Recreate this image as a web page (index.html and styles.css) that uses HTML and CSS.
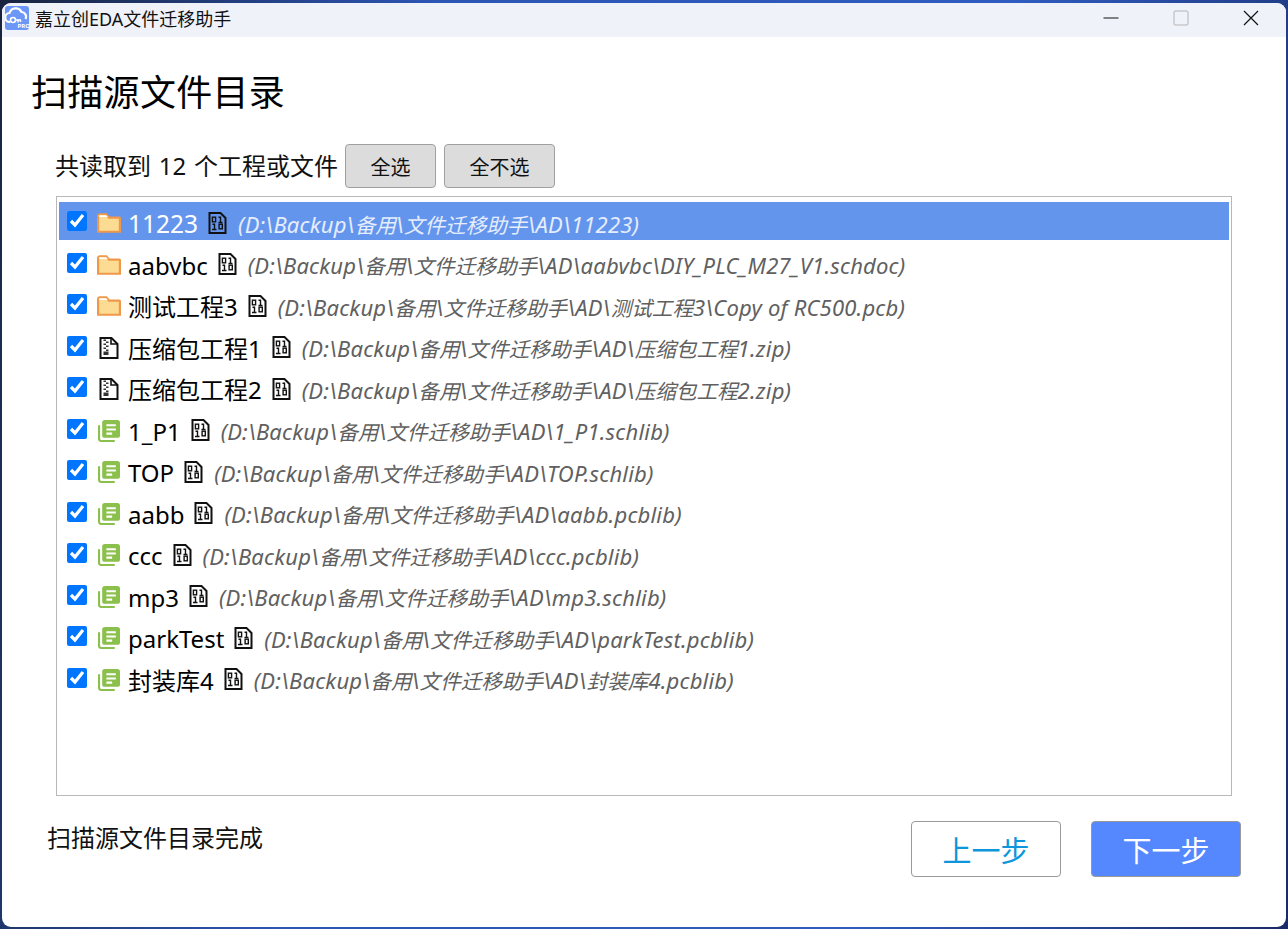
FILE: index.html
```html
<!DOCTYPE html>
<html lang="zh-CN">
<head>
    <meta charset="UTF-8">
    <title>嘉立创EDA文件迁移助手</title>
    <link rel="stylesheet" href="styles.css">
</head>
<body>
    <svg class="defs" width="0" height="0">
        <symbol id="i-folder" viewBox="0 0 22 19">
            <path d="M1 17.5V3a1.5 1.5 0 0 1 1.500-1.500h6L11 4.500h9.500a.5.5 0 0 1 .5.500v12.500z" fill="#fcdc93" stroke="#f0984a" stroke-width="2"/>
            <path d="M2 4V2.500h6.500L10 4z" fill="#fff"/>
        </symbol>
        <symbol id="i-bin" viewBox="0 0 18 22">
            <path d="M1 1h11l5 5v15H1z" fill="none" stroke="#111" stroke-width="2"/>
            <g fill="none" stroke="#111" stroke-width="1.400">
                <rect x="3.900" y="5.200" width="3.200" height="4.600"/>
                <rect x="10.600" y="12.200" width="3.200" height="4.600"/>
                <path d="M10 5.200h2v5.300M10 10.500h4M4 12.200h2v5.300M3.500 17.500h4.500"/>
            </g>
        </symbol>
        <symbol id="i-zip" viewBox="0 0 20 22">
            <path d="M1.500 1h11l6 6v14h-17z" fill="#fff" stroke="#111" stroke-width="2"/>
            <path d="M12 1v6h6" fill="none" stroke="#111" stroke-width="1.600"/>
            <path d="M4.500 2.500h2.500v1.500H4.500zM7 4.500h2.500V6H7zM4.500 6.500h2.500V8H4.500zM7 8.500h2.500V10H7zM4.500 10.500h2.500V12H4.500zM7 12.500h2.500V14H7zM4.500 14.500h5V18h-5z" fill="#333"/>
        </symbol>
        <symbol id="i-lib" viewBox="0 0 21 21">
            <rect x="4" y="0" width="17" height="17" rx="2.500" fill="#8cc04c"/>
            <path d="M1 5v13a2 2 0 0 0 2 2h13" fill="none" stroke="#8cc04c" stroke-width="2"/>
            <path d="M8 4h9v2H8zM8 8h9v2H8zM8 12h5.500v2H8z" fill="#fff"/>
        </symbol>
    </svg>

    <div class="window">
        <header class="titlebar">
            <svg class="logo" viewBox="0 0 24 24">
                <rect width="24" height="24" rx="3" fill="#6c97f6"/>
                <path d="M5 16a4.500 4.500 0 0 1-.5-9 6.500 6.500 0 0 1 12-1 4.800 4.800 0 0 1 4 7" fill="none" stroke="#fff" stroke-width="2.200"/>
                <circle cx="8" cy="14" r="2.500" fill="none" stroke="#fff" stroke-width="1.600"/>
                <path d="M10 14h6M13 14v2.500M15.500 14v2" fill="none" stroke="#fff" stroke-width="1.500"/>
                <text x="12.500" y="22" class="logo_pro">PRO</text>
            </svg>
            <span class="app_title">嘉立创EDA文件迁移助手</span>
            <div class="win_btns">
                <span class="win_btn"><svg width="16" height="16" viewBox="0 0 16 16"><path d="M.5 8h15" stroke="#111" stroke-width="1"/></svg></span>
                <span class="win_btn"><svg width="16" height="16" viewBox="0 0 16 16"><rect x="1" y="1" width="14" height="14" rx="2" fill="none" stroke="#c8c8cc" stroke-width="1.500"/></svg></span>
                <span class="win_btn"><svg width="16" height="16" viewBox="0 0 16 16"><path d="M1 1l14 14M15 1L1 15" stroke="#111" stroke-width="1.200"/></svg></span>
            </div>
        </header>

        <main class="content">
            <h1 class="page_title">扫描源文件目录</h1>

            <div class="toolbar">
                <span class="count">共读取到 12 个工程或文件</span>
                <button class="tool_btn tool_all">全选</button>
                <button class="tool_btn tool_none">全不选</button>
            </div>

            <ul class="file_list">
                <li class="file_row selected">
                    <input type="checkbox" checked>
                    <svg class="type_icon"><use href="#i-folder"/></svg>
                    <span class="name">11223</span>
                    <svg class="bin_icon"><use href="#i-bin"/></svg>
                    <span class="path">(D:\Backup\<i>备用</i>\<i>文件迁移助手</i>\AD\11223)</span>
                </li>
                <li class="file_row">
                    <input type="checkbox" checked>
                    <svg class="type_icon"><use href="#i-folder"/></svg>
                    <span class="name">aabvbc</span>
                    <svg class="bin_icon"><use href="#i-bin"/></svg>
                    <span class="path">(D:\Backup\<i>备用</i>\<i>文件迁移助手</i>\AD\aabvbc\DIY_PLC_M27_V1.schdoc)</span>
                </li>
                <li class="file_row">
                    <input type="checkbox" checked>
                    <svg class="type_icon"><use href="#i-folder"/></svg>
                    <span class="name">测试工程3</span>
                    <svg class="bin_icon"><use href="#i-bin"/></svg>
                    <span class="path">(D:\Backup\<i>备用</i>\<i>文件迁移助手</i>\AD\<i>测试工程</i>3\Copy of RC500.pcb)</span>
                </li>
                <li class="file_row">
                    <input type="checkbox" checked>
                    <svg class="type_icon"><use href="#i-zip"/></svg>
                    <span class="name">压缩包工程1</span>
                    <svg class="bin_icon"><use href="#i-bin"/></svg>
                    <span class="path">(D:\Backup\<i>备用</i>\<i>文件迁移助手</i>\AD\<i>压缩包工程</i>1.zip)</span>
                </li>
                <li class="file_row">
                    <input type="checkbox" checked>
                    <svg class="type_icon"><use href="#i-zip"/></svg>
                    <span class="name">压缩包工程2</span>
                    <svg class="bin_icon"><use href="#i-bin"/></svg>
                    <span class="path">(D:\Backup\<i>备用</i>\<i>文件迁移助手</i>\AD\<i>压缩包工程</i>2.zip)</span>
                </li>
                <li class="file_row">
                    <input type="checkbox" checked>
                    <svg class="type_icon"><use href="#i-lib"/></svg>
                    <span class="name">1_P1</span>
                    <svg class="bin_icon"><use href="#i-bin"/></svg>
                    <span class="path">(D:\Backup\<i>备用</i>\<i>文件迁移助手</i>\AD\1_P1.schlib)</span>
                </li>
                <li class="file_row">
                    <input type="checkbox" checked>
                    <svg class="type_icon"><use href="#i-lib"/></svg>
                    <span class="name">TOP</span>
                    <svg class="bin_icon"><use href="#i-bin"/></svg>
                    <span class="path">(D:\Backup\<i>备用</i>\<i>文件迁移助手</i>\AD\TOP.schlib)</span>
                </li>
                <li class="file_row">
                    <input type="checkbox" checked>
                    <svg class="type_icon"><use href="#i-lib"/></svg>
                    <span class="name">aabb</span>
                    <svg class="bin_icon"><use href="#i-bin"/></svg>
                    <span class="path">(D:\Backup\<i>备用</i>\<i>文件迁移助手</i>\AD\aabb.pcblib)</span>
                </li>
                <li class="file_row">
                    <input type="checkbox" checked>
                    <svg class="type_icon"><use href="#i-lib"/></svg>
                    <span class="name">ccc</span>
                    <svg class="bin_icon"><use href="#i-bin"/></svg>
                    <span class="path">(D:\Backup\<i>备用</i>\<i>文件迁移助手</i>\AD\ccc.pcblib)</span>
                </li>
                <li class="file_row">
                    <input type="checkbox" checked>
                    <svg class="type_icon"><use href="#i-lib"/></svg>
                    <span class="name">mp3</span>
                    <svg class="bin_icon"><use href="#i-bin"/></svg>
                    <span class="path">(D:\Backup\<i>备用</i>\<i>文件迁移助手</i>\AD\mp3.schlib)</span>
                </li>
                <li class="file_row">
                    <input type="checkbox" checked>
                    <svg class="type_icon"><use href="#i-lib"/></svg>
                    <span class="name">parkTest</span>
                    <svg class="bin_icon"><use href="#i-bin"/></svg>
                    <span class="path">(D:\Backup\<i>备用</i>\<i>文件迁移助手</i>\AD\parkTest.pcblib)</span>
                </li>
                <li class="file_row">
                    <input type="checkbox" checked>
                    <svg class="type_icon"><use href="#i-lib"/></svg>
                    <span class="name">封装库4</span>
                    <svg class="bin_icon"><use href="#i-bin"/></svg>
                    <span class="path">(D:\Backup\<i>备用</i>\<i>文件迁移助手</i>\AD\<i>封装库</i>4.pcblib)</span>
                </li>
            </ul>

            <footer class="bottom">
                <span class="status">扫描源文件目录完成</span>
                <div class="steps">
                    <button class="step_btn prev">上一步</button>
                    <button class="step_btn next">下一步</button>
                </div>
            </footer>
        </main>

        <!-- 화면 전체에 깔린 옅은 워터마크 -->
        <svg class="watermark" width="1288" height="929">
            <defs>
                <g id="wm-set">
                    <text transform="translate(0 0) rotate(-48)">zouyuxuan</text>
                    <text transform="translate(175 0) rotate(-48)">2025-02-25</text>
                    <text transform="translate(350 0) rotate(-48)">09:29</text>
                </g>
                <g id="wm-row">
                    <use href="#wm-set" x="0"/>
                    <use href="#wm-set" x="525"/>
                    <use href="#wm-set" x="1050"/>
                    <use href="#wm-set" x="1575"/>
                    <use href="#wm-set" x="2100"/>
                </g>
            </defs>
            <use href="#wm-row" x="-921" y="82"/>
            <use href="#wm-row" x="-834" y="167"/>
            <use href="#wm-row" x="-747" y="252"/>
            <use href="#wm-row" x="-660" y="337"/>
            <use href="#wm-row" x="-1098" y="422"/>
            <use href="#wm-row" x="-1011" y="507"/>
            <use href="#wm-row" x="-924" y="592"/>
            <use href="#wm-row" x="-837" y="677"/>
            <use href="#wm-row" x="-750" y="762"/>
            <use href="#wm-row" x="-663" y="847"/>
            <use href="#wm-row" x="-576" y="932"/>
        </svg>
    </div>
</body>
</html>
```

FILE: styles.css
```css
*{
    padding: 0;
    margin: 0;
    box-sizing: border-box;
    font-family: "Noto Sans", "Noto Sans CJK SC", sans-serif;
}
ul{
    list-style-type: none;
}
html, body{
    height: 100%;
    overflow: hidden;
}
body{
    padding: 3px 2px 2px 2px;
    background: linear-gradient(100deg, #18243f 0%, #2c55b4 30%, #2f5cc0 70%, #1a2c66 100%);
}
.defs{
    position: absolute;
}
.window{
    position: relative;
    height: 924px;
    overflow: hidden;
    background: #fff;
    border-radius: 9px;
}
.titlebar{
    display: flex;
    align-items: center;
    height: 34px;
    padding: 0 0 4px 3px;
    background: #f0f2f9;
}
.logo{
    width: 24px;
    height: 24px;
}
.logo_pro{
    font-size: 6px;
    font-weight: 700;
    fill: #fff;
}
.app_title{
    margin-left: 6px;
    font-size: 18px;
    color: #111;
}
.win_btns{
    display: flex;
    margin-left: auto;
}
.win_btn{
    display: flex;
    justify-content: center;
    align-items: center;
    width: 70px;
    height: 30px;
}
.content{
    padding: 31px 45px 0 30px;
}
.page_title{
    margin-left: -1px;
    font-size: 36px;
    font-weight: 400;
    line-height: 50px;
    letter-spacing: .3px;
    color: #000;
}
.toolbar{
    display: flex;
    align-items: center;
    height: 44px;
    margin: 26px 0 8px 23px;
}
.count{
    padding-bottom: 3px;
    font-size: 24px;
    word-spacing: 1.500px;
    color: #111;
}
.tool_btn{
    height: 44px;
    margin-left: 8px;
    border: 1px solid #a0a0a0;
    border-radius: 4px;
    background: #dcdcdc;
    font-size: 20px;
    color: #111;
}
.tool_all{
    width: 91px;
    margin-left: 7px;
}
.tool_none{
    width: 111px;
}
.file_list{
    display: flex;
    flex-direction: column;
    gap: 3.500px;
    width: 1176px;
    height: 600px;
    margin-left: 24px;
    padding: 5px 2px 0 2px;
    border: 1px solid #b8b8b8;
}
.file_row{
    display: flex;
    align-items: center;
    flex: none;
    height: 38px;
    padding: 6px 0 0 8px;
    color: #000;
}
.file_row input{
    flex: none;
    width: 20px;
    height: 20px;
    margin-top: -6px;
}
.type_icon{
    flex: none;
    width: 24px;
    height: 22px;
    margin: -2px 7px 0 10px;
}
.name{
    font-size: 24px;
    line-height: 32px;
}
.bin_icon{
    flex: none;
    width: 19px;
    height: 22px;
    margin: -3px 11px 0 10px;
}
.path{
    font-size: 22px;
    font-style: italic;
    line-height: 32px;
    letter-spacing: .2px;
    color: #606060;
    white-space: nowrap;
}
.path i{
    font-size: 20.600px;
    letter-spacing: 0;
}
.selected{
    background: #6495ed;
}
.selected .name{
    font-size: 24.500px;
    color: #fff;
}
.selected .path{
    color: #e6edfc;
}
.bottom{
    display: flex;
    justify-content: space-between;
    margin: 25px 0 0 15px;
}
.status{
    font-size: 24px;
    line-height: 34px;
    color: #111;
}
.steps{
    display: flex;
    gap: 30px;
}
.step_btn{
    width: 150px;
    height: 56px;
    border: 1px solid #999;
    border-radius: 4px;
    font-size: 29px;
}
.prev{
    background: #fff;
    color: #0d96dc;
}
.next{
    background: #5588ff;
    color: #fff;
}
.watermark{
    position: absolute;
    left: -2px;
    top: -3px;
    pointer-events: none;
}
.watermark text{
    font-size: 20px;
    fill: #000;
    fill-opacity: .02;
}
```
